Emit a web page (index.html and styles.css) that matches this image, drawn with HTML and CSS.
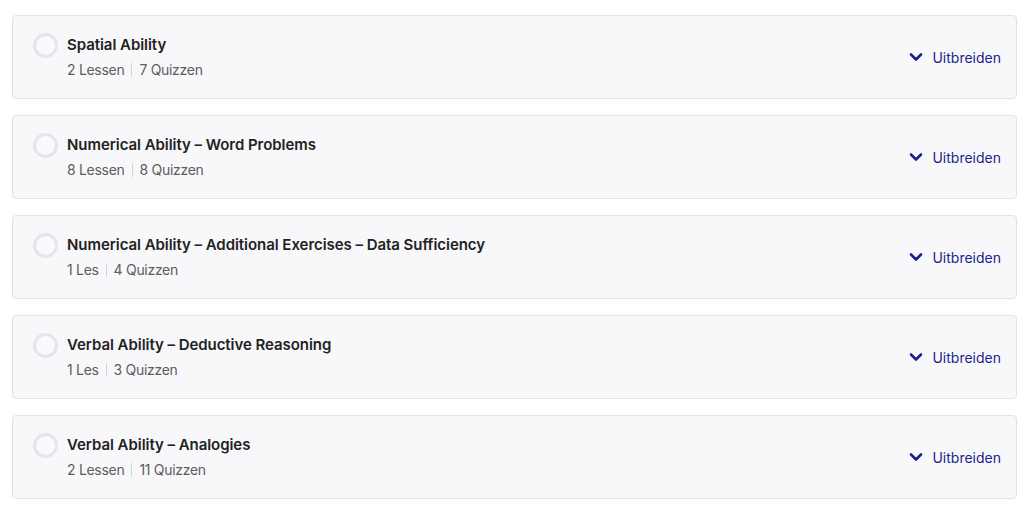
FILE: index.html
```html
<!DOCTYPE html>
<html lang="nl">
<head>
<meta charset="utf-8">
<link rel="stylesheet" href="styles.css">
</head>
<body>
<div class="list">
  <div class="card">
    <div class="main">
      <span class="status"></span>
      <div class="info">
        <div class="title">Spatial Ability</div>
        <div class="meta"><span>2 Lessen</span><span class="sep"></span><span>7 Quizzen</span></div>
      </div>
    </div>
    <button class="expand"><svg viewBox="0 0 14 10" width="14" height="10"><path d="M2 2.5 L7 7.5 L12 2.5" fill="none" stroke="currentColor" stroke-width="2.6" stroke-linecap="round" stroke-linejoin="round"/></svg>Uitbreiden</button>
  </div>
  <div class="card">
    <div class="main">
      <span class="status"></span>
      <div class="info">
        <div class="title">Numerical Ability – Word Problems</div>
        <div class="meta"><span>8 Lessen</span><span class="sep"></span><span>8 Quizzen</span></div>
      </div>
    </div>
    <button class="expand"><svg viewBox="0 0 14 10" width="14" height="10"><path d="M2 2.5 L7 7.5 L12 2.5" fill="none" stroke="currentColor" stroke-width="2.6" stroke-linecap="round" stroke-linejoin="round"/></svg>Uitbreiden</button>
  </div>
  <div class="card">
    <div class="main">
      <span class="status"></span>
      <div class="info">
        <div class="title">Numerical Ability – Additional Exercises – Data Sufficiency</div>
        <div class="meta"><span>1 Les</span><span class="sep"></span><span>4 Quizzen</span></div>
      </div>
    </div>
    <button class="expand"><svg viewBox="0 0 14 10" width="14" height="10"><path d="M2 2.5 L7 7.5 L12 2.5" fill="none" stroke="currentColor" stroke-width="2.6" stroke-linecap="round" stroke-linejoin="round"/></svg>Uitbreiden</button>
  </div>
  <div class="card">
    <div class="main">
      <span class="status"></span>
      <div class="info">
        <div class="title">Verbal Ability – Deductive Reasoning</div>
        <div class="meta"><span>1 Les</span><span class="sep"></span><span>3 Quizzen</span></div>
      </div>
    </div>
    <button class="expand"><svg viewBox="0 0 14 10" width="14" height="10"><path d="M2 2.5 L7 7.5 L12 2.5" fill="none" stroke="currentColor" stroke-width="2.6" stroke-linecap="round" stroke-linejoin="round"/></svg>Uitbreiden</button>
  </div>
  <div class="card">
    <div class="main">
      <span class="status"></span>
      <div class="info">
        <div class="title">Verbal Ability – Analogies</div>
        <div class="meta"><span>2 Lessen</span><span class="sep"></span><span>11 Quizzen</span></div>
      </div>
    </div>
    <button class="expand"><svg viewBox="0 0 14 10" width="14" height="10"><path d="M2 2.5 L7 7.5 L12 2.5" fill="none" stroke="currentColor" stroke-width="2.6" stroke-linecap="round" stroke-linejoin="round"/></svg>Uitbreiden</button>
  </div>
</div>
</body>
</html>
```
FILE: styles.css
```css
* { box-sizing: border-box; }
html, body { margin: 0; background: #ffffff; }
body {
  font-family: "Inter", "Noto Sans", sans-serif;
  color: #222;
}
.list {
  padding: 15px 15px 0 12px;
  display: flex;
  flex-direction: column;
  gap: 16px;
}
.card {
  height: 84px;
  background: #f8f8fb;
  border: 1px solid #e1e3e8;
  border-radius: 4px;
  display: flex;
  align-items: center;
  justify-content: space-between;
  padding: 0 15px 0 20px;
}
.main {
  align-self: flex-start;
  display: flex;
  align-items: flex-start;
  padding-top: 19px;
}
.status {
  flex: none;
  width: 25px;
  height: 25px;
  border: 3px solid #e3e5ea;
  border-radius: 50%;
  margin-right: 9px;
  margin-top: -2px;
  background: #fafafc;
}
.info {
  display: flex;
  flex-direction: column;
  gap: 6px;
}
.title {
  font-size: 15px;
  font-weight: 600;
  line-height: 20px;
  color: #222222;
  letter-spacing: -0.05px;
}
.meta {
  display: flex;
  align-items: center;
  font-size: 14px;
  line-height: 18px;
  color: #5d5d5d;
  letter-spacing: -0.3px;
}
.sep {
  width: 1px;
  height: 14px;
  background: #d6d6d6;
  margin: 0 7px;
}
.expand {
  display: flex;
  align-items: center;
  gap: 9px;
  background: none;
  border: 0;
  padding: 0;
  font-family: inherit;
  font-size: 14px;
  color: #1b1f8c;
  cursor: pointer;
}
.expand svg { display: block; }
```
